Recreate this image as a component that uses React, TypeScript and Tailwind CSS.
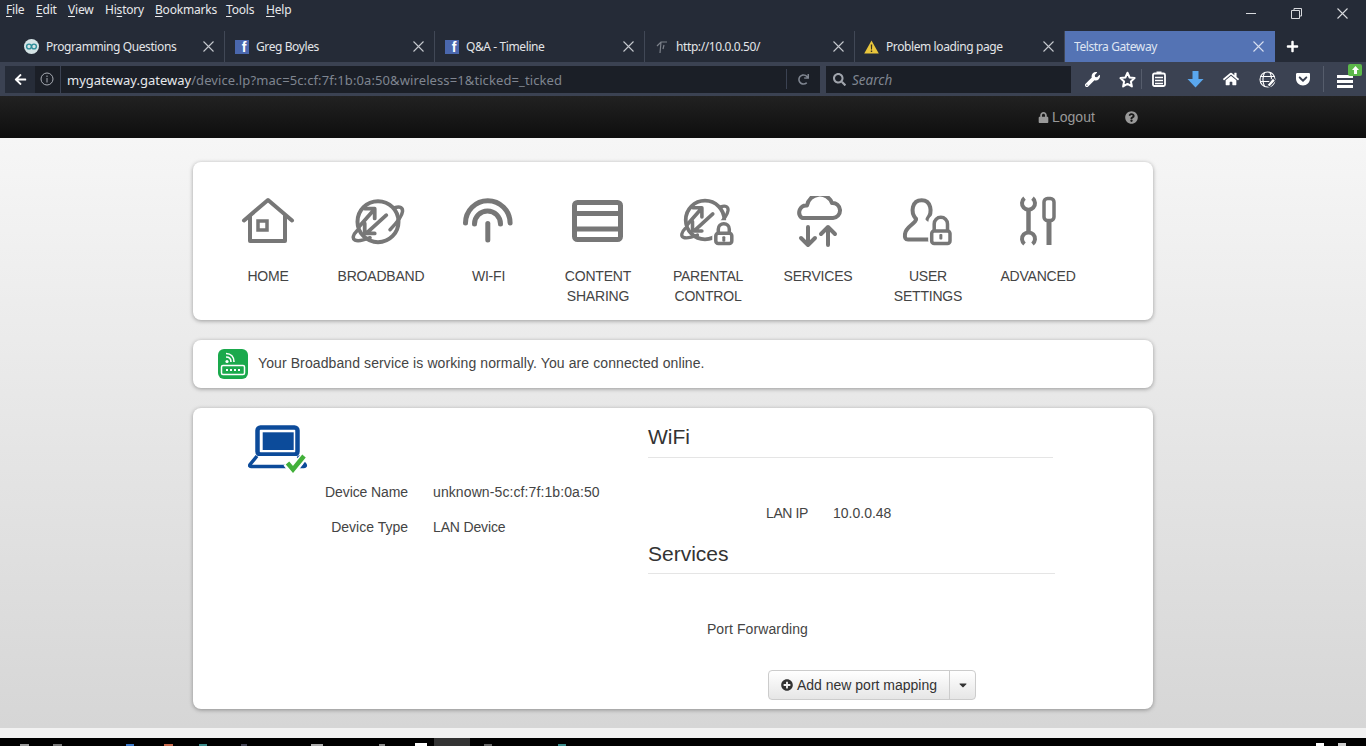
import React from "react";
import { FaLock, FaQuestionCircle, FaPlusCircle, FaWrench, FaHome, FaGetPocket, FaSearch, FaRedo, FaArrowLeft, FaPlus, FaCaretDown } from "react-icons/fa";

const U = ({ pre = "", u, post = "", w }: { pre?: string; u: string; post?: string; w: string }) => (
  <span className={"block shrink-0 " + w}>
    {pre}
    <span className="underline underline-offset-2">{u}</span>
    {post}
  </span>
);

const X = ({ size = 11, color = "#c5c8ce" }: { size?: number; color?: string }) => (
  <svg width={size} height={size} viewBox="0 0 11 11" fill="none" stroke={color} strokeWidth="1.1">
    <path d="M0.5 0.5L10.5 10.5M10.5 0.5L0.5 10.5" />
  </svg>
);

const Fb = () => (
  <span className="flex h-[14px] w-[14px] items-end justify-end overflow-hidden bg-[#4a67ad] pr-[2px] font-['Liberation_Sans',sans-serif] text-[14px] leading-[14px] font-bold tracking-normal text-white">
    f
  </span>
);

const Tab = ({ icon, label, active }: { icon?: React.ReactNode; label: string; active?: boolean }) =>
  active ? (
    <div className="flex h-[31px] w-[210px] shrink-0 items-center bg-[#5473b4] pr-[11px] pl-[9px] text-[#dfe5f2]">
      <span className="flex-1 truncate">{label}</span>
      <X color="#d8dff0" />
    </div>
  ) : (
    <div className="flex h-[31px] w-[210px] shrink-0 items-center border-r border-[#414856] pr-[10px] pl-[9px] text-[#e3e5e8]">
      <span className="mr-[7px] flex w-[15px] items-center justify-center">{icon}</span>
      <span className="flex-1 truncate">{label}</span>
      <X />
    </div>
  );

const Globe = () => (
  <g fill="none" stroke="#777" strokeWidth="4" strokeLinecap="round" strokeLinejoin="round">
    <circle cx="25" cy="25" r="20.5" />
    <path d="M41.7 11C47 9 50 11 49.5 15C49 20 43 27 37 33" strokeWidth="3.5" />
    <path d="M4 34C0 38 -1 42 2 43.5C6 45 12 43 17 41" strokeWidth="3.5" />
    <path d="M6 30L21 13M21.7 12H12M21.7 12V21.7" strokeWidth="3.8" />
    <path d="M33.3 18.5L13.5 36.5M11.7 36.7V26.7M11.7 36.7H21.7" strokeWidth="3.8" />
  </g>
);

const Padlock = ({ x, y, w = 20, h = 19, sh = 0 }: { x: number; y: number; w?: number; h?: number; sh?: number }) => (
  <g strokeLinecap="butt" strokeLinejoin="round">
    <rect x={x - 3.5} y={y - 8 - sh} width={w + 7} height={h + 12 + sh} rx="7" fill="#fff" stroke="none" />
    <path
      d={`M${x + 2.5} ${y + 5}V${y + 1 - sh}a${w / 2 - 2.5} ${w / 2 - 2.5} 0 0 1 ${w - 5} 0V${y + 5}`}
      fill="none"
      stroke="#777"
      strokeWidth="3.5"
    />
    <rect x={x} y={y + 5} width={w} height={h - 5} rx="2.5" fill="#fff" stroke="#777" strokeWidth="3.5" />
    <rect x={x + w / 2 - 1.5} y={y + 8} width="3" height="5.5" rx="1" fill="#777" stroke="none" />
  </g>
);

const icons: Record<string, React.ReactNode> = {
  home: (
    <g fill="none" stroke="#777" strokeWidth="4" strokeLinecap="round" strokeLinejoin="round">
      <path d="M6 24.5L30 4L54 24.5" />
      <path d="M12 19V45H47V19" strokeLinecap="butt" />
      <rect x="20" y="25" width="9" height="9" strokeWidth="3.5" strokeLinejoin="miter" />
    </g>
  ),
  broadband: (
    <g transform="translate(2 0.7)">
      <Globe />
    </g>
  ),
  wifi: (
    <g fill="none" stroke="#777" strokeLinecap="round" transform="translate(-1.5 0)">
      <path d="M8 27A22.3 22.3 0 0 1 52.6 27" strokeWidth="5" />
      <path d="M17 28A13 13 0 0 1 43 28" strokeWidth="5" />
      <path d="M30.3 27.5V44" strokeWidth="5" />
    </g>
  ),
  content: (
    <g fill="none" stroke="#777" strokeWidth="5">
      <rect x="6.5" y="6.5" width="46" height="37" rx="3" />
      <path d="M6 17.5H53M6 33H53" />
    </g>
  ),
  parental: (
    <g>
      <g transform="translate(3.5 0.5) scale(.94)">
        <Globe />
      </g>
      <Padlock x={37.8} y={32.2} w={16} h={15.3} />
    </g>
  ),
  services: (
    <g fill="none" stroke="#777" strokeLinecap="round" strokeLinejoin="round" strokeWidth="4">
      <path d="M14 22H45A7.5 7.5 0 0 0 44 7A13 13 0 0 0 19 9.5A7 7 0 0 0 14 22Z" />
      <path d="M20 31V49M13 42L20 49L27 42" />
      <path d="M40 49V31M33 38L40 31L47 38" />
    </g>
  ),
  user: (
    <g fill="none" stroke="#777" strokeWidth="4" strokeLinecap="round" strokeLinejoin="round">
      <path d="M18 23C12 16 14 4.3 23.7 4.3C33 4.3 35 16 29.5 23L35 27" />
      <path d="M18 23C18 28 8 30 7 38C6.5 42 7.5 43.5 10 43.5H33" />
      <Padlock x={33.7} y={30} w={18.3} h={17.5} sh={3} />
    </g>
  ),
  advanced: (
    <g fill="none" stroke="#777" strokeWidth="4">
      <path d="M16.5 2.2A6.5 6.5 0 1 0 24.5 2.2" />
      <path d="M20.5 13V38" strokeWidth="4.5" />
      <path d="M16.5 48A6.5 6.5 0 1 1 24.5 48" />
      <rect x="36" y="2.5" width="10" height="22" rx="3.5" strokeWidth="3.5" />
      <path d="M41 24V49" strokeWidth="5" />
    </g>
  ),
};

const nav = [
  { k: "home", l: ["HOME"], w: "w-[116px]" },
  { k: "broadband", l: ["BROADBAND"], w: "w-[110px]" },
  { k: "wifi", l: ["WI-FI"], w: "w-[105px]" },
  { k: "content", l: ["CONTENT", "SHARING"], w: "w-[114px]" },
  { k: "parental", l: ["PARENTAL", "CONTROL"], w: "w-[106px]" },
  { k: "services", l: ["SERVICES"], w: "w-[114px]" },
  { k: "user", l: ["USER", "SETTINGS"], w: "w-[106px]" },
  { k: "advanced", l: ["ADVANCED"], w: "w-[114px]" },
];

const Row = ({ label, value, cls, lt = "", vt = "" }: { label: string; value?: string; cls: string; lt?: string; vt?: string }) => (
  <div className={"flex h-[20px] items-center " + cls}>
    <span className={"w-[160px] shrink-0 text-right " + lt}>{label}</span>
    {value && <span className={"ml-[25px] " + vt}>{value}</span>}
  </div>
);

export default function App() {
  return (
    <div className="flex h-[746px] w-[1366px] flex-col overflow-hidden bg-[#f2f2f2] font-['Liberation_Sans',sans-serif] text-[14px] text-[#444]">
      {/* Browser chrome */}
      <div className="h-[62px] shrink-0 bg-[#252b37] font-['Noto_Sans',sans-serif] text-[12px] tracking-[-0.4px] text-[#e3e5e8]">
        <div className="flex h-[31px] justify-between">
          <div className="flex h-[20px] items-center pl-[6px] text-[12px] tracking-[-0.2px] text-[#e8e9ec]">
            <U w="w-[30px]" u="F" post="ile" />
            <U w="w-[32px]" u="E" post="dit" />
            <U w="w-[37px]" u="V" post="iew" />
            <U w="w-[50px]" pre="Hi" u="s" post="tory" />
            <U w="w-[71px]" u="B" post="ookmarks" />
            <U w="w-[40px]" u="T" post="ools" />
            <U w="w-[30px]" u="H" post="elp" />
          </div>
          <div className="flex items-center gap-[35px] pr-[18px] pb-[4px]">
            <span className="h-px w-[10px] bg-[#d8dade]" />
            <svg width="11" height="11" viewBox="0 0 11 11" fill="none" stroke="#d8dade">
              <path d="M3 2.5V.5H10.5V8H8.5M.5 2.5H8.5V10.5H.5Z" />
            </svg>
            <X size={11} color="#d8dade" />
          </div>
        </div>
        <div className="flex items-center pl-[15px]">
          <Tab
            label="Programming Questions"
            icon={
              <svg width="15" height="15" viewBox="0 0 15 15">
                <circle cx="7.5" cy="7.5" r="7.5" fill="#d5e4e6" />
                <circle cx="5" cy="7.5" r="2.4" fill="none" stroke="#2e8e9a" strokeWidth="1.4" />
                <circle cx="10" cy="7.5" r="2.4" fill="none" stroke="#2e8e9a" strokeWidth="1.4" />
              </svg>
            }
          />
          <Tab label="Greg Boyles" icon={<Fb />} />
          <Tab label="Q&A - Timeline" icon={<Fb />} />
          <Tab
            label="http://10.0.0.50/"
            icon={
              <svg width="12" height="14" viewBox="0 0 12 14" fill="none" stroke="#7c818a" strokeWidth="1.2">
                <path d="M1 6L5 2H11M5 2L4 13M8 5L7 9" />
              </svg>
            }
          />
          <Tab
            label="Problem loading page"
            icon={
              <svg width="15" height="14" viewBox="0 0 15 14">
                <path d="M7.5 .5L14.8 13.5H.2Z" fill="#e9c63c" />
                <path d="M6.8 4.5H8.2L8 9.5H7ZM6.8 10.5H8.2V12H6.8Z" fill="#3a3220" />
              </svg>
            }
          />
          <Tab label="Telstra Gateway" active />
          <FaPlus className="ml-[11px] text-[13px] text-white" />
        </div>
      </div>

      {/* Nav bar */}
      <div className="flex h-[34px] shrink-0 items-center bg-[#3b4252] pl-[5px] font-['Noto_Sans',sans-serif]">
        <div className="flex h-[27px] w-[815px] items-center bg-[#1b1f27]">
          <span className="flex h-full w-[30px] items-center justify-center bg-[#262c38]">
            <FaArrowLeft className="text-[13px] text-white" />
          </span>
          <svg className="ml-[5px]" width="14" height="14" viewBox="0 0 14 14" fill="none" stroke="#a9adb5">
            <circle cx="7" cy="7" r="6" />
            <path d="M7 6V10.5M7 3.5V5" />
          </svg>
          <span className="ml-[6px] h-full w-px bg-[#3b4252]" />
          <span className="ml-[6px] flex-1 pt-[2px] text-[13px] leading-none whitespace-nowrap text-[#e6e8ec]">
            mygateway.gateway
            <span className="tracking-[0.1px] text-[#7f8590]">/device.lp?mac=5c:cf:7f:1b:0a:50&amp;wireless=1&amp;ticked=_ticked</span>
          </span>
          <span className="h-[20px] w-px bg-[#3b4252]" />
          <span className="flex w-[33px] justify-center">
            <FaRedo className="text-[11px] text-[#7f8590]" />
          </span>
        </div>
        <div className="ml-[6px] flex h-[27px] w-[245px] items-center bg-[#1b1f27] pl-[7px] text-[13.5px] text-[#7f8590] italic">
          <FaSearch className="mr-[6px] text-[13px] text-[#a0a4ac]" />
          <span className="pt-[2px]">Search</span>
        </div>
        <div className="flex items-center text-white">
          <span className="ml-[13px] flex w-[16px] justify-center">
            <FaWrench className="text-[15px]" />
          </span>
          <svg className="ml-[19px]" width="17" height="17" viewBox="0 0 24 24" fill="none" stroke="#fff" strokeWidth="2.8" strokeLinejoin="round">
            <path d="M12 2.5L15 9.2L22 10L16.8 14.8L18.2 21.8L12 18.2L5.8 21.8L7.2 14.8L2 10L9 9.2Z" />
          </svg>
          <span className="ml-[5px] h-[20px] w-px bg-[#565d6c]" />
          <svg className="ml-[10px]" width="14" height="16" viewBox="0 0 14 16" fill="none" stroke="#fff" strokeWidth="1.8">
            <rect x="1" y="2.5" width="12" height="12.5" rx="1.5" />
            <path d="M3 6.5H11M3 9.5H11M3 12.5H11" strokeWidth="1.4" />
            <rect x="4.5" y=".5" width="5" height="2.5" fill="#fff" stroke="none" />
          </svg>
          <svg className="ml-[21px]" width="17" height="17" viewBox="0 0 17 17" fill="#5aa7ee">
            <path d="M5.5 0H11.5V8H16.5L8.5 16.5L.5 8H5.5Z" />
          </svg>
          <span className="ml-[19px] flex w-[16px] justify-center">
            <FaHome className="text-[16px]" />
          </span>
          <svg className="ml-[20px]" width="17" height="17" viewBox="0 0 17 17" fill="none" stroke="#fff" strokeWidth="1.1">
            <circle cx="8.5" cy="8.5" r="7.5" />
            <path d="M1.5 5.5H15.5M1.5 10.5H15.5M5.5 1.5C3.5 6 3.5 11 5.5 15.5M11 1.5C13 6 13 11 11 15.5" />
            <path d="M8 14L14 7L16.5 9.5L10.5 16Z" fill="#fff" stroke="#3b4252" />
          </svg>
          <span className="ml-[19px] flex w-[16px] justify-center">
            <FaGetPocket className="text-[16px]" />
          </span>
          <span className="ml-[12px] h-[26px] w-px bg-[#565d6c]" />
          <span className="relative mt-[4px] ml-[13px] flex h-[13px] w-[16px] flex-col justify-between">
            <span className="h-[3px] bg-white" />
            <span className="h-[3px] bg-white" />
            <span className="h-[3px] bg-white" />
            <span className="absolute top-[-11px] left-[11px] flex h-[12px] w-[14px] items-center justify-center rounded-[2px] bg-[#5cb84a]">
              <svg width="7" height="8" viewBox="0 0 7 8" fill="#fff">
                <path d="M3.5 0L7 4H5V8H2V4H0Z" />
              </svg>
            </span>
          </span>
        </div>
      </div>

      {/* Gateway header */}
      <div className="flex h-[42px] shrink-0 items-center bg-gradient-to-b from-[#222222] to-[#0e0e0e] text-[#999]">
        <FaLock className="ml-[1038px] text-[11px]" />
        <span className="ml-[3px]">Logout</span>
        <FaQuestionCircle className="ml-[30px] text-[13px]" />
      </div>

      {/* Gateway body */}
      <div className="flex h-[590px] shrink-0 flex-col items-center bg-gradient-to-b from-[#f6f6f6] to-[#d6d6d6] pt-[24px] pr-[20px]">
        <div className="h-[158px] w-[960px] rounded-[8px] bg-white pt-[34px] pl-[17px] shadow-[0_1px_4px_rgba(0,0,0,0.35)]">
          <div className="flex">
            {nav.map((n) => (
              <div key={n.k} className={"flex shrink-0 flex-col items-center text-center tracking-[-0.2px] text-[#444] " + n.w}>
                <svg width="60" height="52" viewBox="0 0 60 52" className="mb-[18px]">
                  {icons[n.k]}
                </svg>
                {n.l.map((t) => (
                  <div key={t} className="h-[20px] leading-[20px]">
                    {t}
                  </div>
                ))}
              </div>
            ))}
          </div>
        </div>

        <div className="mt-[20px] flex h-[48px] w-[960px] shrink-0 items-center rounded-[8px] bg-white pl-[25px] shadow-[0_1px_4px_rgba(0,0,0,0.35)]">
          <svg width="30" height="30" viewBox="0 0 30 30" className="mr-[10px]">
            <rect width="30" height="30" rx="6" fill="#1aa94c" />
            <rect x="3.5" y="16.5" width="23" height="9" rx="1.5" fill="none" stroke="#fff" strokeWidth="1.5" />
            <path d="M8 21H10M12 21H14M16 21H18M20 21H22" stroke="#fff" strokeWidth="1.8" />
            <path d="M8 4.5C13 4.5 16 8 16 13M8 8C11 8 13 10 13 13" fill="none" stroke="#fff" strokeWidth="1.6" />
            <circle cx="9" cy="12.5" r="1.6" fill="#fff" />
          </svg>
          <span className="mb-[2px] tracking-[0.1px]">Your Broadband service is working normally. You are connected online.</span>
        </div>

        <div className="mt-[20px] flex h-[301px] w-[960px] shrink-0 rounded-[8px] bg-white shadow-[0_1px_4px_rgba(0,0,0,0.35)]">
          <div className="w-[455px] shrink-0 pt-[17px]">
            <svg width="60" height="48" viewBox="0 0 60 48" className="ml-[55px]">
              <rect x="9.5" y="2.5" width="40" height="27" rx="3" fill="none" stroke="#0c4b9a" strokeWidth="4.5" />
              <rect x="14.7" y="7.3" width="31" height="17.7" fill="#0c4b9a" />
              <path d="M9 31L2 39.5Q1 41.5 3 41.5H56Q58 41.5 57 39.5L50 31" fill="#fff" stroke="#0c4b9a" strokeWidth="3.5" strokeLinejoin="round" />
              <path d="M38.7 38L45 46L57 30" fill="none" stroke="#fff" strokeWidth="8" />
              <path d="M39.5 38L45 44.5L56 31" fill="none" stroke="#42b03a" strokeWidth="4.5" />
            </svg>
            <Row cls="mt-[9px] pl-[55px]" lt="tracking-[-0.1px]" vt="tracking-[0.1px]" label="Device Name" value="unknown-5c:cf:7f:1b:0a:50" />
            <Row cls="mt-[15px] pl-[55px]" vt="tracking-[-0.15px]" label="Device Type" value="LAN Device" />
          </div>
          <div className="w-[407px] shrink-0 pt-[16px]">
            <div className="h-[25px] border-0 text-[21px] leading-[25px] text-[#333]">WiFi</div>
            <div className="mt-[8px] h-px w-[405px] bg-[#e5e5e5]" />
            <Row cls="mt-[45px] pl-0" lt="tracking-[-0.4px]" label="LAN IP" value="10.0.0.48" />
            <div className="mt-[18px] h-[25px] text-[21px] leading-[25px] text-[#333]">Services</div>
            <div className="mt-[7px] h-px w-[407px] bg-[#e5e5e5]" />
            <Row cls="mt-[45px] pl-0" lt="tracking-[0.1px]" label="Port Forwarding" />
            <div className="mt-[31px] ml-[120px] flex h-[30px] w-[208px] rounded-[4px] border border-[#ccc] bg-gradient-to-b from-white to-[#e6e6e6] text-[#333]">
              <span className="flex w-[181px] items-center justify-center border-r border-[#ccc]">
                <FaPlusCircle className="mr-[4px] text-[12px]" />
                Add new port mapping
              </span>
              <span className="flex flex-1 items-center justify-center">
                <FaCaretDown className="text-[12px]" />
              </span>
            </div>
          </div>
        </div>
      </div>

      <div className="h-[10px] shrink-0 bg-[#f2f2f2]" />

      {/* Task bar sliver */}
      <div className="flex h-[8px] shrink-0 items-end bg-black">
        <span className="ml-[20px] h-[2px] w-[9px] bg-[#9a9a9a]" />
        <span className="ml-[24px] h-[2px] w-[9px] bg-[#777]" />
        <span className="ml-[64px] h-[2px] w-[8px] bg-[#3a78c8]" />
        <span className="ml-[30px] h-[2px] w-[9px] bg-[#c8684a]" />
        <span className="ml-[26px] h-[2px] w-[8px] bg-[#3a8a8a]" />
        <span className="ml-[34px] h-[2px] w-[6px] bg-[#445]" />
        <span className="ml-[64px] h-[2px] w-[12px] bg-[#aaa]" />
        <span className="ml-[56px] h-[2px] w-[6px] bg-[#888]" />
        <span className="ml-[30px] h-[3px] w-[12px] bg-white" />
        <span className="ml-[7px] h-[8px] w-[36px] bg-[#333]" />
        <span className="ml-[14px] h-[2px] w-[8px] bg-[#666]" />
        <span className="ml-[66px] h-[2px] w-[8px] bg-[#3a8a8a]" />
        <span className="ml-[750px] h-[3px] w-[8px] bg-white" />
        <span className="ml-[14px] h-[3px] w-[8px] bg-[#ccc]" />
      </div>
    </div>
  );
}
